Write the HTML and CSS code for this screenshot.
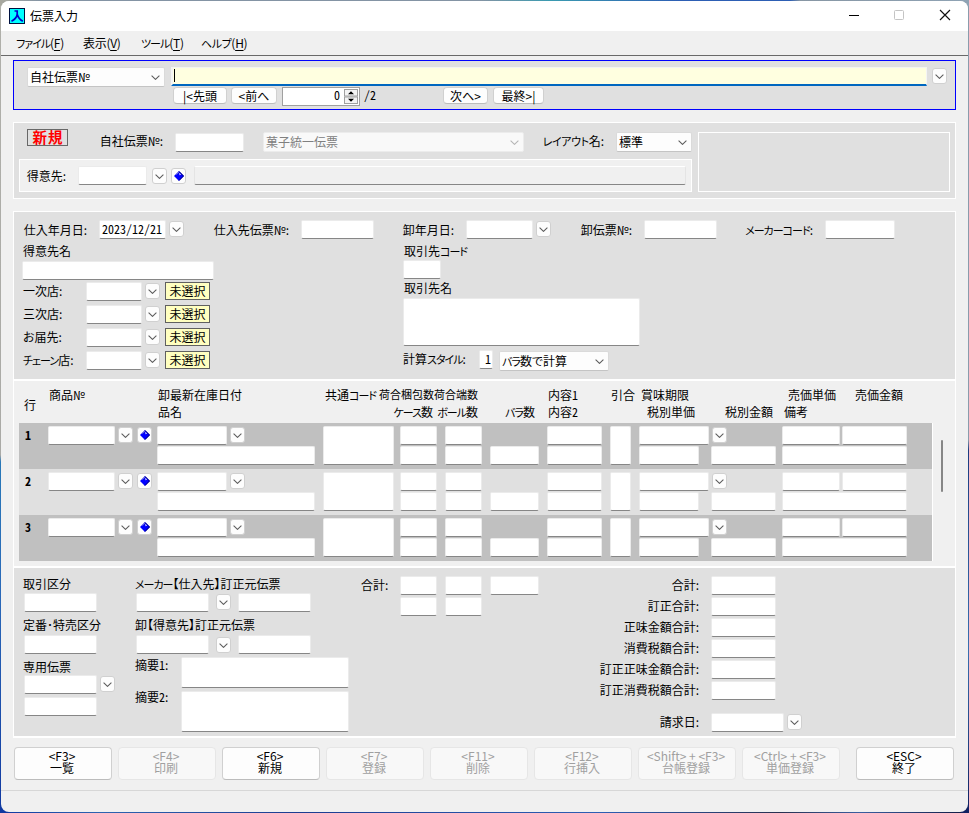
FILE: index.html
```html
<!DOCTYPE html>
<html lang="ja">
<head>
<meta charset="utf-8">
<title>伝票入力</title>
<link rel="stylesheet" href="styles.css">
</head>
<body>
<svg class="symbols" aria-hidden="true">
  <symbol id="chev" viewBox="0 0 9 5"><path d="M.6.6 4.5 4.4 8.4.6" fill="none" stroke="currentColor" stroke-width="1.05"/></symbol>
  <symbol id="gem" viewBox="0 0 10 10"><path d="M5 0 10 5 5 10 0 5Z" fill="#00f"/><path d="M5 .5 9.5 5 5 9.5" fill="none" stroke="#000070" stroke-width="1"/><path d="M2.3 3.7 5 1" stroke="#6a6ad0" stroke-width="1"/><path d="M5.2 1.8 7 3.4 5.6 4.2Z" fill="#fff"/></symbol>
</svg>
<div class="window">
  <header class="titlebar">
    <svg class="appicon" viewBox="0 0 16 16"><rect x=".5" y=".5" width="15" height="15" fill="#0ff" stroke="#001040"/><path d="M5.5 3H8.2V6.2C7.8 9.5 5.8 11.6 2.5 13.2M8.2 6.2C9.2 9.5 10.8 11.7 13.8 13.2" fill="none" stroke="#00c" stroke-width="1.7"/></svg>
    <h1>伝票入力</h1>
    <svg class="winbtns" viewBox="0 0 104 12"><path d="M2 6.5H12" stroke="#000"/><rect x="47.5" y="1.5" width="9" height="9" rx="1" fill="none" stroke="#c4c4c4"/><path d="M93 1 103 11M103 1 93 11" stroke="#111" stroke-width="1.15"/></svg>
  </header>
  <nav class="menu"><span class="m1"><span class="k">ファイル</span>(<u>F</u>)</span><span class="m2">表示(<u>V</u>)</span><span class="m3"><span class="k">ツール</span>(<u>T</u>)</span><span class="m4"><span class="k h">ヘルプ</span>(<u>H</u>)</span></nav>

  <section class="search">
    <div class="search-top">
      <div class="select">自社伝票№<svg><use href="#chev"/></svg></div>
      <div class="active-field"><i></i></div>
      <div class="dd"><svg><use href="#chev"/></svg></div>
    </div>
    <div class="search-nav">
      <button class="nav-first">|&lt;先頭</button><button class="nav-prev">&lt;前へ</button>
      <div class="spin"><span>0</span><svg viewBox="0 0 14 15"><rect x=".5" y=".5" width="13" height="6.5" fill="#f4f4f4" stroke="#a0a0a0"/><rect x=".5" y="8" width="13" height="6.5" fill="#f4f4f4" stroke="#a0a0a0"/><path d="M4 5.3 7 2.3 10 5.3ZM4 9.8H10L7 12.8Z"/></svg></div>
      <span class="pages">/2</span>
      <button class="nav-next">次へ&gt;</button><button class="nav-last">最終&gt;|</button>
    </div>
  </section>

  <section class="slip">
    <div class="slip-left">
      <div class="slip-row">
        <strong class="new">新規</strong>
        <label>自社伝票№:</label><div class="f"></div>
        <div class="select off">菓子統一伝票<svg><use href="#chev"/></svg></div>
        <label><span class="k h">レイアウト</span>名:</label><div class="select">標準<svg><use href="#chev"/></svg></div>
      </div>
      <div class="customer">
        <label>得意先:</label><div class="f"></div><div class="dd"><svg><use href="#chev"/></svg></div><div class="dd gem"><svg><use href="#gem"/></svg></div><div class="f readonly"></div>
      </div>
    </div>
    <div class="blank"></div>
  </section>

  <main>
    <section class="detail">
      <div class="dates">
        <label>仕入年月日:</label><div class="f date">2023/12/21</div><div class="dd"><svg><use href="#chev"/></svg></div>
        <label>仕入先伝票№:</label><div class="f"></div>
        <label>卸年月日:</label><div class="f"></div><div class="dd"><svg><use href="#chev"/></svg></div>
        <label>卸伝票№:</label><div class="f"></div>
        <label><span class="k">メーカーコード</span>:</label><div class="f"></div>
      </div>
      <div class="detail-cols">
        <div class="shops">
          <p>得意先名</p>
          <div class="f name"></div>
          <div class="shop"><p>一次店:</p><div class="f"></div><div class="dd"><svg><use href="#chev"/></svg></div><span class="tag">未選択</span></div>
          <div class="shop"><p>三次店:</p><div class="f"></div><div class="dd"><svg><use href="#chev"/></svg></div><span class="tag">未選択</span></div>
          <div class="shop"><p>お届先:</p><div class="f"></div><div class="dd"><svg><use href="#chev"/></svg></div><span class="tag">未選択</span></div>
          <div class="shop"><p><span class="k">チェーン</span>店:</p><div class="f"></div><div class="dd"><svg><use href="#chev"/></svg></div><span class="tag">未選択</span></div>
        </div>
        <div class="partner">
          <p class="p-code">取引先<span class="k">コード</span></p>
          <div class="f code"></div>
          <p>取引先名</p>
          <div class="f memo"></div>
          <div class="calc"><p>計算<span class="k">スタイル</span>:</p><div class="f">1</div><div class="select"><span><span class="k">バラ</span>数で計算</span><svg><use href="#chev"/></svg></div></div>
        </div>
      </div>
    </section>

    <section class="lines">
      <div class="head">
        <p class="h-no">行</p>
        <p>商品№</p>
        <p>卸最新在庫日付<br>品名</p>
        <p class="h-common">共通<span class="k">コード</span></p>
        <p class="small r">荷合梱包数<br><b><span class="k">ケース</span>数</b></p>
        <p class="small r">荷合端数<br><b><span class="k">ボール</span>数</b></p>
        <p class="h-loose"><br><span class="k">バラ</span>数</p>
        <p>内容<i>1</i><br>内容<i>2</i></p>
        <p>引合</p>
        <p>賞味期限<br><span class="push">税別単価</span></p>
        <p><br>税別金額</p>
        <p><span class="push4">売価単価</span><br>備考</p>
        <p>売価金額</p>
      </div>
      <div class="body">
        <div class="rows">
          <div class="line">
            <b>1</b>
            <div class="c-code"><div class="f"></div><div class="dd"><svg><use href="#chev"/></svg></div><div class="dd gem"><svg><use href="#gem"/></svg></div></div>
            <div class="c-item"><div class="f"></div><div class="dd"><svg><use href="#chev"/></svg></div><div class="f wide"></div></div>
            <div class="f tall common"></div>
            <div class="pair"><div class="f"></div><div class="f"></div></div>
            <div class="pair"><div class="f"></div><div class="f"></div></div>
            <div class="f loose"></div>
            <div class="pair content"><div class="f"></div><div class="f"></div></div>
            <div class="f tall hiki"></div>
            <div class="c-price"><div class="f"></div><div class="dd"><svg><use href="#chev"/></svg></div><div class="f unit"></div><div class="f amount"></div></div>
            <div class="c-sale"><div class="f"></div><div class="f"></div><div class="f wide"></div></div>
          </div>
          <div class="line">
            <b>2</b>
            <div class="c-code"><div class="f"></div><div class="dd"><svg><use href="#chev"/></svg></div><div class="dd gem"><svg><use href="#gem"/></svg></div></div>
            <div class="c-item"><div class="f"></div><div class="dd"><svg><use href="#chev"/></svg></div><div class="f wide"></div></div>
            <div class="f tall common"></div>
            <div class="pair"><div class="f"></div><div class="f"></div></div>
            <div class="pair"><div class="f"></div><div class="f"></div></div>
            <div class="f loose"></div>
            <div class="pair content"><div class="f"></div><div class="f"></div></div>
            <div class="f tall hiki"></div>
            <div class="c-price"><div class="f"></div><div class="dd"><svg><use href="#chev"/></svg></div><div class="f unit"></div><div class="f amount"></div></div>
            <div class="c-sale"><div class="f"></div><div class="f"></div><div class="f wide"></div></div>
          </div>
          <div class="line">
            <b>3</b>
            <div class="c-code"><div class="f"></div><div class="dd"><svg><use href="#chev"/></svg></div><div class="dd gem"><svg><use href="#gem"/></svg></div></div>
            <div class="c-item"><div class="f"></div><div class="dd"><svg><use href="#chev"/></svg></div><div class="f wide"></div></div>
            <div class="f tall common"></div>
            <div class="pair"><div class="f"></div><div class="f"></div></div>
            <div class="pair"><div class="f"></div><div class="f"></div></div>
            <div class="f loose"></div>
            <div class="pair content"><div class="f"></div><div class="f"></div></div>
            <div class="f tall hiki"></div>
            <div class="c-price"><div class="f"></div><div class="dd"><svg><use href="#chev"/></svg></div><div class="f unit"></div><div class="f amount"></div></div>
            <div class="c-sale"><div class="f"></div><div class="f"></div><div class="f wide"></div></div>
          </div>
        </div>
        <div class="thumb"></div>
      </div>
    </section>

    <section class="totals">
      <div class="kinds">
        <p>取引区分</p><div class="f"></div>
        <p>定番･特売区分</p><div class="f"></div>
        <p>専用伝票</p><div class="with-dd"><div class="f"></div><div class="dd"><svg><use href="#chev"/></svg></div></div><div class="f last"></div>
      </div>
      <div class="origins">
        <p class="o-maker"><span class="k">メーカー</span>【仕入先】訂正元伝票</p>
        <div class="origin"><div class="f"></div><div class="dd"><svg><use href="#chev"/></svg></div><div class="f"></div></div>
        <p class="o-whole">卸【得意先】訂正元伝票</p>
        <div class="origin second"><div class="f"></div><div class="dd"><svg><use href="#chev"/></svg></div><div class="f"></div></div>
        <div class="note"><p>摘要<i>1</i>:</p><div class="f"></div></div>
        <div class="note n2"><p>摘要<i>2</i>:</p><div class="f"></div></div>
      </div>
      <div class="counts">
        <label>合計:</label><div class="f"></div><div class="f"></div><div class="f big"></div>
        <div class="f under"></div><div class="f"></div>
      </div>
      <div class="sums">
        <label>合計:</label><div class="f"></div>
        <label>訂正合計:</label><div class="f"></div>
        <label>正味金額合計:</label><div class="f"></div>
        <label>消費税額合計:</label><div class="f"></div>
        <label>訂正正味金額合計:</label><div class="f"></div>
        <label>訂正消費税額合計:</label><div class="f"></div>
        <label class="bill">請求日:</label><div class="bill billing"><div class="f"></div><div class="dd"><svg><use href="#chev"/></svg></div></div>
      </div>
    </section>
  </main>

  <div class="keys">
    <button>&lt;F3&gt;<br>一覧</button>
    <button disabled>&lt;F4&gt;<br>印刷</button>
    <button>&lt;F6&gt;<br>新規</button>
    <button disabled>&lt;F7&gt;<br>登録</button>
    <button disabled>&lt;F11&gt;<br>削除</button>
    <button disabled>&lt;F12&gt;<br>行挿入</button>
    <button disabled>&lt;Shift&gt; + &lt;F3&gt;<br>台帳登録</button>
    <button disabled>&lt;Ctrl&gt; + &lt;F3&gt;<br>単価登録</button>
    <button class="esc">&lt;ESC&gt;<br>終了</button>
  </div>
  <footer></footer>
</div>
</body>
</html>
```
FILE: styles.css
```css
* { box-sizing: border-box; }
body {
  margin: 0; width: 969px; height: 813px; padding: 1px; overflow: hidden;
  background:
    linear-gradient(90deg, #a9a99f 0, #8494a4 40px, #8494a4 480px, #3a9ab0 550px, #2d5fb4 680px, #2d5fb4 790px, #8796a4 800px, #8fa3b4) 0 0 / 969px 6px no-repeat,
    linear-gradient(#b0b0aa 0, #aaaaa6 455px, #2878b8 462px, #2a68b8 600px, #1038a0) 0 0 / 8px 813px no-repeat,
    linear-gradient(#8a9cac 0, #8a9cac 440px, #1c3c80 450px, #3a70b0 650px, #102060) 961px 0 / 8px 813px no-repeat,
    linear-gradient(90deg, #1038a0, #2d64b0 100px, #1c3c90 300px, #2d5fb4 600px, #283050 780px, #3a5fa0 860px, #101840);
  font: 12px/12px "Noto Sans CJK JP", sans-serif; color: #000;
  font-feature-settings: "palt";
}
p { margin: 0; white-space: nowrap; }
i { font-style: normal; font-feature-settings: "hwid"; }
button { font: inherit; font-feature-settings: inherit; color: #000; padding: 0; margin: 0; white-space: nowrap; }
.symbols { position: absolute; width: 0; height: 0; }
.window { width: 967px; height: 811px; background: #f0f0f0; border-radius: 8px; overflow: hidden; display: flex; flex-direction: column; }

/* narrow katakana */
.k { font-size: 11px; letter-spacing: -1px; }
.k.h { letter-spacing: -.4px; }

.titlebar { height: 30px; flex: none; background: #fff; display: flex; align-items: center; padding: 0 17px 0 8px; }
.appicon { width: 16px; height: 16px; margin-right: 5px; }
h1 { font-size: 12px; font-weight: 400; margin: 0; flex: 1; }
.winbtns { width: 104px; height: 12px; margin-top: -2px; }
.menu { height: 25px; flex: none; border-bottom: 1px solid #696969; display: flex; align-items: center; padding-left: 15px; }
.menu > span { white-space: nowrap; letter-spacing: -.3px; }
.menu u { text-underline-offset: 2px; }
.m1 { width: 67px; } .m2 { width: 58px; } .m3 { width: 60px; }

/* shared controls */
label { white-space: nowrap; text-align: right; padding-right: 12px; }
.f { height: 19px; background: #fff; border: 1px solid #ebebeb; border-bottom-color: #868686; border-radius: 2px; min-width: 0; }
.readonly { background: #f0f0f0; border-color: #fff #e4e4e4 #868686 #e4e4e4; }
.dd { width: 15px; height: 16px; background: #fdfdfd; border: 1px solid #d0d0d0; border-radius: 3px; display: flex; align-items: center; justify-content: center; color: #5c5c5c; flex: none; }
.dd svg { width: 9px; height: 5px; margin-top: 1px; }
.dd.gem svg { width: 10px; height: 10px; margin: 0; flex: none; }
.select { height: 20px; background: #fdfdfd; border: 1px solid #dadada; border-bottom-color: #c4c4c4; border-radius: 2px; display: flex; align-items: center; justify-content: space-between; padding: 0 4px 0 2px; white-space: nowrap; }
.select svg { width: 9px; height: 5px; color: #5c5c5c; margin-top: 1px; }
.select.off { background: #f9f9f9; border-color: #ececec; color: #808080; }
.off svg { color: #b5b5b5; }

.search { margin: 4px 0 0 12px; width: 943px; height: 50px; flex: none; border: 1px solid #00f; background: #e0e0e0; padding: 6px 0 0 13px; }
.search-top { display: grid; grid-template-columns: 138px 756px 15px; column-gap: 6px; }
.search-top .dd { margin: 1px 0 0 -1px; }
.active-field { height: 19px; background: #ffffe0; border: 1px solid #f4f4f4; border-width: 1px 1px 0; border-left-width: 2px; border-bottom: 2px solid #0067c0; }
.active-field i { display: block; width: 1px; height: 13px; margin: 1px 0 0 1px; background: #000; }
.search-nav { display: grid; grid-template-columns: 54px 46px 78px 72px 45px 51px; column-gap: 5px; padding-left: 146px; }
.search-nav button { height: 17px; background: #fdfdfd; border: 1px solid #d0d0d0; border-bottom-color: #bcbcbc; border-radius: 4px; line-height: 14px; }
.nav-prev { margin-left: -1px; margin-right: 1px; }
.spin { height: 19px; margin: 0 1px 0 -1px; background: #fff; border: 1px solid #a0a0a0; display: flex; justify-content: flex-end; align-items: center; gap: 4px; padding-right: 1px; }
.spin span { font-feature-settings: "hwid"; margin-top: -3px; }
.spin svg { width: 14px; height: 15px; }
.pages { padding-top: 2px; margin-left: -2px; font-feature-settings: "hwid"; }

.slip { margin: 12px 0 0 12px; width: 943px; height: 77px; flex: none; border: 1px solid #fff; background: #e0e0e0; display: flex; padding: 9px 0 0 5px; }
.slip-left { width: 673px; margin-right: 6px; }
.slip-row { display: grid; grid-template-columns: 41px 107px 69px 19px 261px 92px 76px; padding-left: 8px; height: 27px; align-items: start; }
.slip-row label { line-height: 18px; }
.slip-row .f { margin-top: 1px; }
.slip-row .off { grid-column: 5; }
.new { height: 17px; margin-top: -3px; border: 1px solid #686868; color: #f00; font-size: 14.5px; line-height: 14px; letter-spacing: 1px; text-align: center; padding-left: 1px; }
.customer { height: 33px; background: #f0f0f0; border: 1px solid #fff; display: grid; grid-template-columns: 58px 69px 20px 19px 8px 492px; align-items: start; padding-top: 6px; }
.customer label { line-height: 20px; }
.customer .dd { justify-self: end; margin-top: 2px; }
.customer .readonly { grid-column: 6; }
.blank { width: 252px; height: 60px; border: 1px solid #fff; }

main { margin: 12px 0 0 12px; width: 943px; height: 527px; flex: none; border: 1px solid #fff; border-width: 1px 1px 2px; background: #e0e0e0; }
.detail { height: 167px; padding-top: 8px; }
.dates { display: grid; grid-template-columns: 85px 67px 18px 117px 73px 92px 67px 18px 93px 73px 108px 70px; align-items: center; }
.dates .dd { justify-self: end; margin-top: -1px; }
.date { font-feature-settings: "hwid"; line-height: 16px; padding-left: 2px; }
.detail-cols { display: flex; }
.shops { width: 389px; padding: 6px 0 0 8px; }
.shops > p { height: 16px; padding-left: 1px; }
.shops > .name { width: 192px; margin-bottom: 2px; }
.shop { height: 23px; display: grid; grid-template-columns: 64px 56px 18px 5px 45px; padding-left: 0; align-items: start; }
.shop p { line-height: 18px; padding-left: 1px; }
.shop .dd { justify-self: end; margin-top: 1px; }
.tag { grid-column: 5; height: 18px; line-height: 16px; border: 1px solid #606060; background: #ffffc0; text-align: center; }
.partner { padding-top: 6px; }
.partner > p { padding-left: 1px; height: 19px; line-height: 18px; }
.partner > .p-code { height: 15px; line-height: 12px; }
.code { width: 38px; }
.memo { width: 237px; height: 48px; }
.calc { display: grid; grid-template-columns: 76px 14px 6px 110px; padding-top: 4px; align-items: start; }
.calc p { line-height: 18px; }
.calc .f { text-align: right; padding-right: 1px; line-height: 16px; font-feature-settings: "hwid"; }
.calc .select { grid-column: 4; margin-top: 1px; }

.lines { height: 189px; background: #f0f0f0; border: 2px solid #fff; border-width: 2px 0; padding-left: 5px; }
.head { height: 42px; padding: 5px 0 0 5px; display: grid; grid-template-columns: 25px 109px 167px 54px 54px 45px 27px 43px 63px 30px 84px 59px 71px 50px; line-height: 17px; }
.head .h-loose { grid-column: 8; }
.h-no { padding-top: 10px; }
.small { font-size: 11px; }
.small b { font-size: 12px; font-weight: 400; }
.r { text-align: right; }
.push { padding-left: 6px; }
.push4 { padding-left: 4px; }
.body { display: flex; align-items: flex-start; }
.rows { width: 914px; border-right: 1px solid #fff; }
.line { height: 46px; padding-top: 3px; background: #e0e0e0; display: grid; grid-template-columns: 29px 109px 166px 77px 45px 45px 57px 63px 29px 143px 125px; align-items: start; }
.line:nth-child(odd) { background: #c0c0c0; }
.line > b { padding: 3px 0 0 6px; font-size: 12px; font-feature-settings: "hwid"; }
.c-code { display: grid; grid-template-columns: 67px 18px 19px; }
.c-code .dd { justify-self: end; margin-top: 1px; }
.c-item { display: grid; grid-template-columns: 70px 18px 70px; row-gap: 1px; }
.line .wide { grid-column: 1 / -1; }
.c-item .dd, .c-price .dd { margin: 1px 0 0 3px; }
.tall { height: 39px; }
.common { width: 71px; }
.pair { width: 37px; display: grid; row-gap: 1px; }
.pair.content { width: 55px; }
.loose { width: 49px; margin-top: 20px; }
.hiki { width: 21px; }
.c-price { display: grid; grid-template-columns: 60px 10px 2px 65px; row-gap: 1px; }
.c-price .f:first-child { grid-column: 1 / 3; }
.c-price .dd { grid-column: 3 / 5; }
.unit { grid-column: 1; }
.amount { grid-column: 4; }
.c-sale { display: grid; grid-template-columns: 58px 65px; gap: 1px 2px; }
.thumb { width: 2px; height: 52px; background: #868686; margin: 17px 0 0 8px; border-radius: 1px; }

.totals { height: 168px; display: flex; }
.kinds { width: 121px; padding: 10px 0 0 10px; }
.kinds p { height: 15px; margin-left: -1px; }
.kinds .f { width: 73px; }
.kinds > .f { margin-bottom: 7px; }
.kinds > .f + p { height: 16px; }
.with-dd { display: flex; gap: 3px; margin-top: -2px; margin-bottom: 3px; }
.with-dd .dd { margin-top: 1px; }
.origins { width: 226px; padding: 10px 0 0 1px; }
.origins > p { height: 15px; margin-left: -1px; }
.origins > .o-whole { height: 16px; margin-top: 7px; }
.origin { display: grid; grid-template-columns: 73px 29px 73px; }
.origin .dd { margin: 1px 0 0 7px; }
.second .dd { margin-top: 2px; }
.note { display: grid; grid-template-columns: 45px 168px; margin-top: 3px; }
.note p { padding-top: 2px; margin-left: -1px; }
.note .f { height: 31px; }
.n2 .f { height: 41px; }
.n2 p { padding-top: 0; }
.counts { width: 188px; height: 48px; margin-top: 8px; display: grid; grid-template-columns: 39px 45px 45px 49px; grid-template-rows: 19px 19px; row-gap: 2px; }
.counts label { line-height: 17px; }
.counts .f { width: 37px; }
.counts .big { width: 49px; }
.under { grid-column: 2; }
.sums { margin-top: 8px; display: grid; grid-template-columns: 162px 95px; grid-auto-rows: 19px; row-gap: 2px; }
.sums label { line-height: 17px; }
.sums > .f { width: 65px; }
.sums .bill { margin-top: 11px; }
.billing { display: flex; gap: 3px; }
.billing .f { width: 73px; }
.billing .dd { margin-top: 1px; }

.keys { margin: 9px 0 0 13px; display: flex; gap: 6px; height: 33px; }
.keys button { width: 98px; height: 33px; background: #fdfdfd; border: 1px solid #d0d0d0; border-bottom-color: #bcbcbc; border-radius: 4px; line-height: 12px; padding: 0 2px 3px 0; }
.keys button:disabled { background: #f8f8f8; border-color: #e6e6e6; color: #a0a0a0; }
.keys .esc { margin-left: 10px; }
footer { margin-top: 10px; border-top: 1px solid #d7d7d7; }
```
